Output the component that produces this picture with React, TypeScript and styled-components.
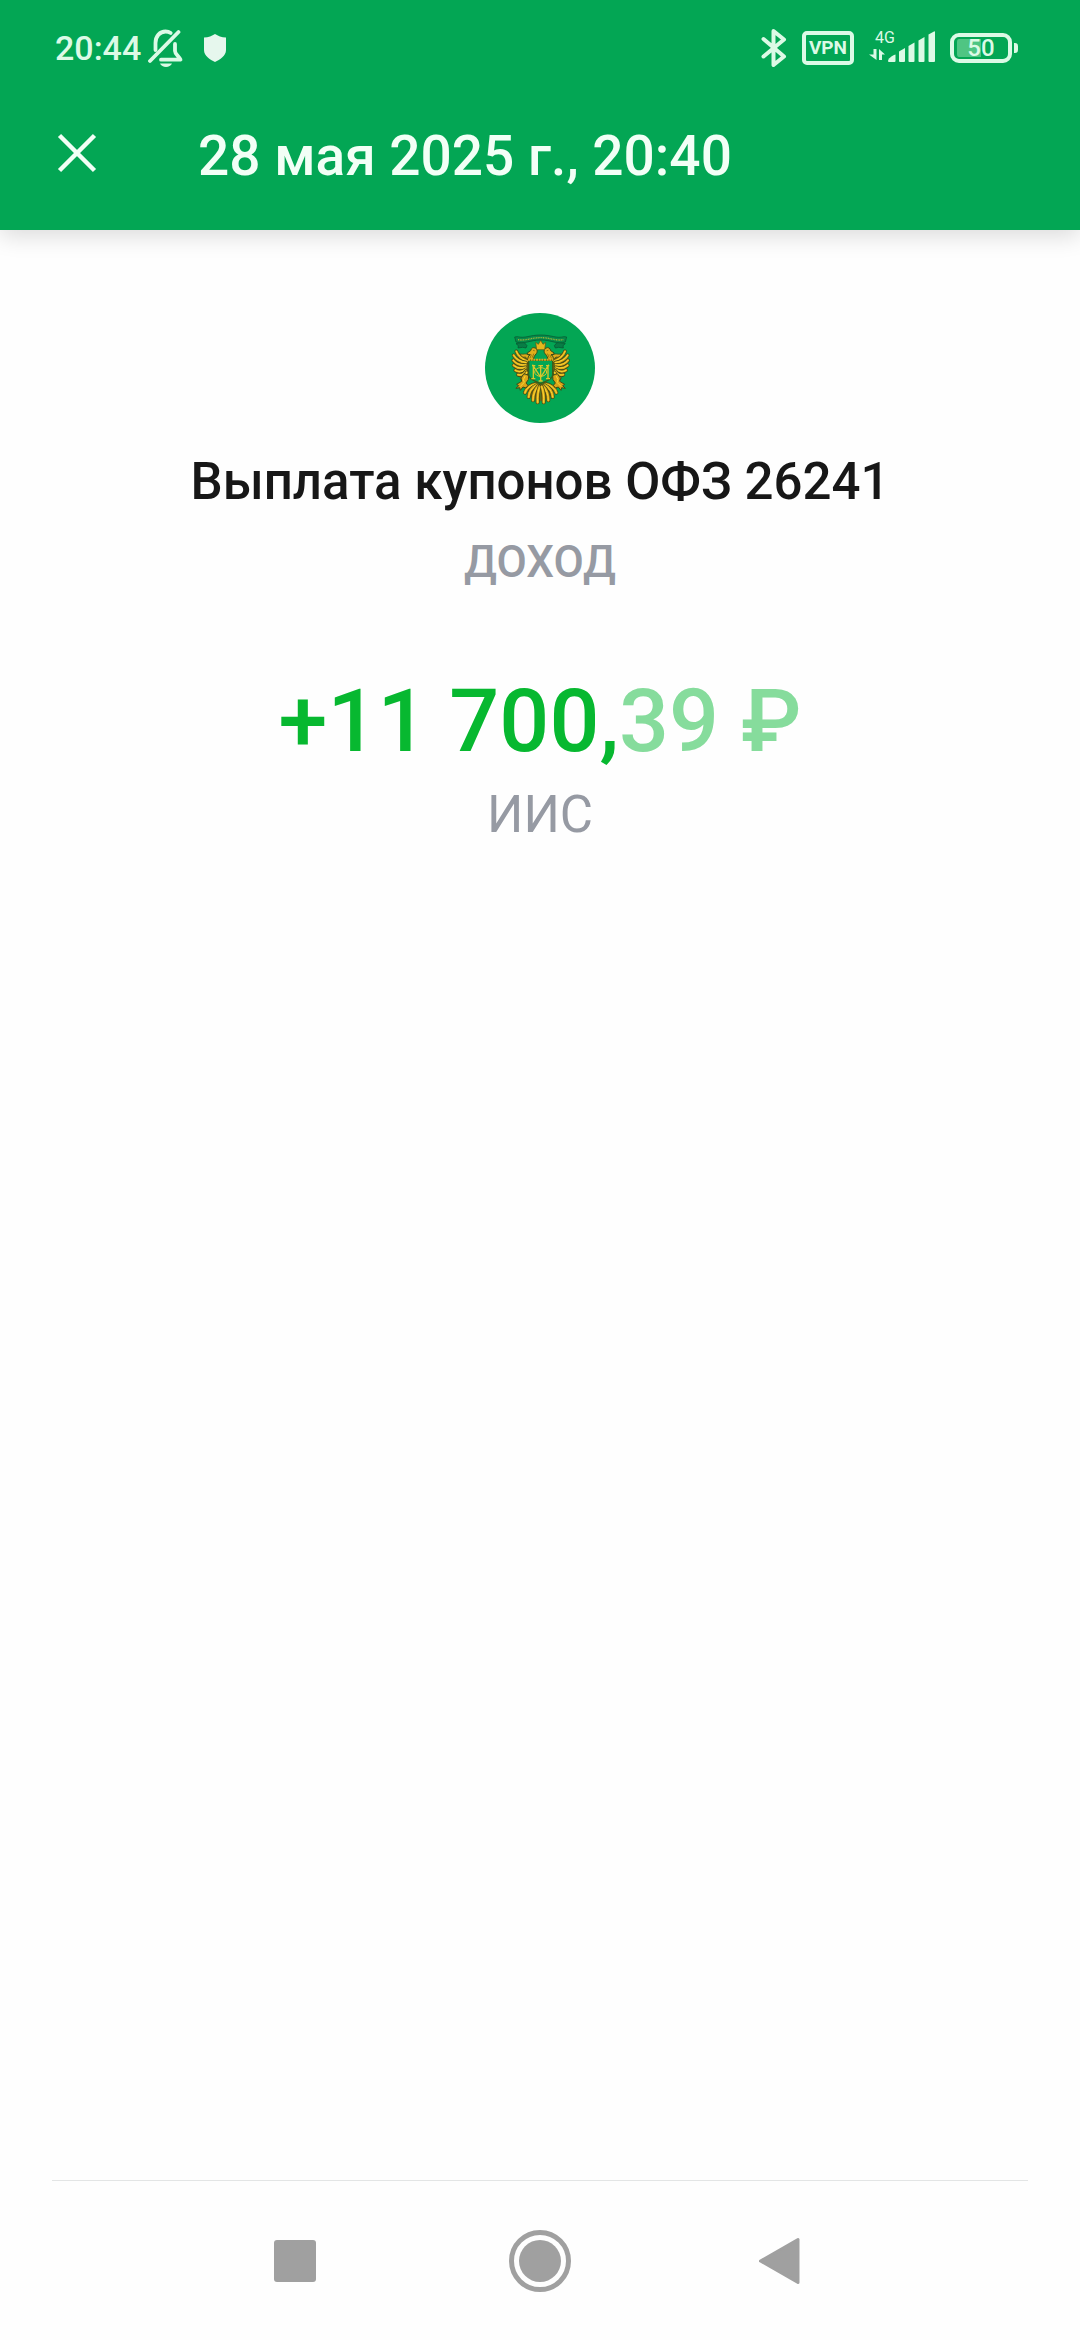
import React from 'react';
import styled, { createGlobalStyle } from 'styled-components';

const green = '#03a654';
const mint = '#dcfae6';

const GlobalStyle = createGlobalStyle`
  *, *::before, *::after { box-sizing: border-box; }
  body {
    margin: 0;
    background: #fefefe;
    font-family: Roboto, "Noto Sans", sans-serif;
  }
  h1, h2, p { margin: 0; }
  svg { display: block; flex: none; }
`;

const Page = styled.div`
  display: flex;
  flex-direction: column;
  min-height: 100vh;
`;

const Header = styled.header`
  background: ${green};
  color: #f2fff6;
  box-shadow: 0 6px 22px rgba(0, 0, 0, 0.14);
`;

const StatusBar = styled.div`
  display: flex;
  align-items: center;
  justify-content: space-between;
  height: 95px;
  padding: 0 62px 0 55px;
  color: ${mint};
`;

const StatusGroup = styled.div<{ $gap: number }>`
  display: flex;
  align-items: center;
  gap: ${(p) => p.$gap}px;
`;

const Clock = styled.time`
  font-size: 34px;
  line-height: 40px;
  font-weight: 500;
`;

const ShieldSlot = styled.span`
  padding-left: 12px;
`;

const VpnBadge = styled.span`
  display: flex;
  align-items: center;
  justify-content: center;
  width: 52px;
  height: 34px;
  border: 4px solid ${mint};
  border-radius: 5px;
  font-size: 19px;
  line-height: 20px;
  font-weight: 700;
`;

const Signal = styled.span`
  display: flex;
  flex-direction: column;
  width: 66px;
  height: 36px;
`;

const NetworkType = styled.span`
  height: 0;
  padding-left: 6px;
  font-size: 16px;
  line-height: 16px;
`;

const Battery = styled.span`
  display: flex;
  align-items: center;
  gap: 2px;
`;

const BatteryBody = styled.span<{ $level: number }>`
  display: flex;
  align-items: center;
  justify-content: center;
  width: 62px;
  height: 30px;
  padding: 2px 3px;
  border: 4px solid ${mint};
  border-radius: 9px;
  background: linear-gradient(90deg, #4fc583 ${(p) => p.$level}%, transparent ${(p) => p.$level}%) content-box;
  font-size: 24px;
  line-height: 24px;
  font-weight: 500;
`;

const BatteryTip = styled.span`
  width: 4px;
  height: 10px;
  border-radius: 0 3px 3px 0;
  background: ${mint};
`;

const Toolbar = styled.div`
  display: flex;
  align-items: center;
  gap: 84px;
  height: 135px;
  padding: 0 40px 14px;
`;

const CloseButton = styled.button`
  display: flex;
  align-items: center;
  justify-content: center;
  width: 74px;
  height: 74px;
  padding: 0 0 6px;
  border: 0;
  background: none;
  color: inherit;
`;

const ToolbarTitle = styled.h1`
  font-size: 55px;
  line-height: 64px;
  font-weight: 500;
`;

const Main = styled.main`
  display: flex;
  flex: 1;
  flex-direction: column;
  align-items: center;
  padding: 83px 32px 0;
  text-align: center;
`;

const OperationName = styled.h2`
  margin-top: 29px;
  color: #171717;
  font-size: 51px;
  line-height: 60px;
  font-weight: 500;
`;

const Category = styled.p`
  margin-top: 22px;
  color: #969aa3;
  font-size: 44px;
  line-height: 56px;
  font-weight: 500;
`;

const Amount = styled.p`
  margin-top: 79px;
  color: #07b830;
  font-size: 88px;
  line-height: 104px;
  font-weight: 500;
  font-kerning: none;
`;

const Fraction = styled.span`
  color: #86dc9c;
`;

const Account = styled.p`
  margin-top: 12px;
  color: #969aa3;
  font-size: 51px;
  line-height: 60px;
`;

const Divider = styled.hr`
  align-self: stretch;
  height: 1px;
  margin: 0 52px;
  border: 0;
  background: #e3e5e5;
`;

const NavBar = styled.nav`
  display: flex;
  align-items: center;
  justify-content: center;
  gap: 146px;
  height: 159px;
`;

const NavButton = styled.button`
  display: flex;
  align-items: center;
  justify-content: center;
  width: 96px;
  height: 96px;
  padding: 0;
  border: 0;
  background: none;
  color: #a0a0a0;
`;

const BellOffIcon = () => (
  <svg width="36" height="38" viewBox="0 0 36 38" fill="none" stroke="currentColor" strokeWidth="3.8" strokeLinecap="round">
    <path d="M2 32 30.500 3" />
    <path d="M7.500 21V14C7.500 7 12 2.500 17.500 2.500c2 0 3.800.5 5.200 1.500" />
    <path d="M27 15v7c0 3 3.500 5 5.500 8.700H13" strokeLinejoin="round" />
    <path d="M12 34.500h12c-1 2.300-3.300 3.500-6 3.500s-5-1.200-6-3.500Z" fill="currentColor" stroke="none" />
  </svg>
);

const ShieldIcon = () => (
  <svg width="24" height="30" viewBox="0 0 24 30" fill="#e6f7ed">
    <path d="M12 1c3 2 6.500 3.300 11 3.500V17c0 6-6 9.500-11 12C7 26.500 1 23 1 17V4.500C5.500 4.300 9 3 12 1Z" />
  </svg>
);

const BluetoothIcon = () => (
  <svg width="26" height="40" viewBox="0 0 26 40" fill="none" stroke="currentColor" strokeWidth="4" strokeLinecap="round" strokeLinejoin="round">
    <path d="M2.500 11 23 28.500 12.500 37V3L23 11.500 2.500 28.500" />
  </svg>
);

const SignalIcon = () => (
  <svg width="66" height="36" viewBox="0 0 66 36" fill="currentColor">
    <path d="M4.500 19h3v11L0 24.500h4.500ZM10 30V19l6 5.500h-3V30Z" />
    <path d="M19 31c0-2 3.500-5.500 7.500-6.500V31q0 1-1 1H20q-1 0-1-1Z" />
    <path d="M30 21.500 36 18v13q0 1-1 1h-4q-1 0-1-1Z" />
    <path d="M39.500 16l6-3.500V31q0 1-1 1h-4q-1 0-1-1Z" />
    <path d="M49.500 10.500l6-3.500v24q0 1-1 1h-4q-1 0-1-1Z" />
    <path d="M59.500 4.500 65 1.500q1-.5 1 .5v29q0 1-1 1h-4.500q-1 0-1-1Z" />
  </svg>
);

const CloseIcon = () => (
  <svg width="40" height="40" viewBox="0 0 40 40" fill="none" stroke="currentColor" strokeWidth="4.500">
    <path d="M2.500 2.500l35 35M37.500 2.500l-35 35" />
  </svg>
);

const feathers = [
  'M172 184C158 178 144 168 139 154',
  'M168 188C154 186 138 178 131 166',
  'M167 195C154 196 138 192 130 181',
  'M167 202C155 206 140 204 131 196',
  'M167 208C158 215 145 217 136 211',
  'M168 213C162 223 153 227 144 224',
  'M170 217C168 227 163 232 155 234',
];

const tail = [
  'M198 252C184 254 168 264 165 278',
  'M201 255C186 262 177 276 176 291',
  'M205 258C195 268 189 284 189 301',
  'M209 260C204 272 202 290 203 307',
];

const Plumes = ({ paths, width }: { paths: string[]; width: number }) => (
  <g fill="none">
    {paths.map((d) => (
      <g key={d}>
        <path d={d} stroke="#3f4a16" strokeWidth={width + 4} />
        <path d={d} stroke="#dca418" strokeWidth={width} />
        <path d={d} stroke="#f7d930" strokeWidth={3} />
      </g>
    ))}
  </g>
);

const EmblemHalf = () => (
  <g strokeLinejoin="round" strokeLinecap="round">
    <path d="M146 158l30 20 4 46-30 8-12-24Z" fill="#6f6614" />
    <path d="M212 248l-40 22 12 22 28 12Z" fill="#6f6614" />
    <Plumes paths={tail} width={8} />
    <Plumes paths={feathers} width={7} />
    <path d="M180 184l-14-13c-7 2-14-2-15-9 9 2 16-3 25 2Z" fill="#dfaa1b" stroke="#3f4a16" strokeWidth="2" />
    <path d="M173 158l9-6c1-8 8-11 14-8 7 4 7 13 2 18-5 5-7 10-8 18h-16c-1-8 1-12 7-16l-8-1Z" fill="#e3ae1b" stroke="#3f4a16" strokeWidth="3" />
    <path d="M190 151l3 1M184 165l-4 9M191 162l-4 10" fill="none" stroke="#6a5a0e" strokeWidth="2" />
    <path d="M161 222l-8 12 2 10-15 9 6 4-8 8 11-2 2 8 8-10 9 3 6-8-6-7 7-10 1-12Z" fill="#dca418" stroke="#3f4a16" strokeWidth="3" />
    <path d="M165 229l-5 10 3 8-11 11" fill="none" stroke="#f7d930" strokeWidth="3" />
    <path d="M154 127l-16 4 7 6-1 7 14-2 10 2 3-7-7-8Z" fill="#087d45" stroke="#07502f" strokeWidth="2" />
  </g>
);

const Emblem = () => (
  <svg width="110" height="110" viewBox="45 39 330 330" role="img" aria-label="Эмблема">
    <circle cx="210" cy="204" r="165" fill={green} />
    <EmblemHalf />
    <g transform="matrix(-1 0 0 1 424 0)">
      <EmblemHalf />
    </g>
    <path d="M176 181h72v43c0 15-21 19-36 27-15-8-36-12-36-27Z" fill={green} stroke="#3d5d17" strokeWidth="4" />
    <path d="M174 179h76" stroke="#d9aa1d" strokeWidth="6" strokeDasharray="6 2" />
    <g fill="none" stroke="#d9c62b" strokeWidth="4">
      <path d="M186 197h10M184 236h12M228 197h10M228 236h12M190 236v-38l22 34 22-34v38M212 197v46M205 197h14M206 243h12" />
      <ellipse cx="212" cy="216" rx="18" ry="13" strokeWidth="3" />
    </g>
    <path d="M197 127l8 6 7-12 7 12 8-6-3 22h-24Z" fill="#e6b81d" stroke="#5a5310" strokeWidth="2" strokeLinejoin="round" />
    <path d="M134 111l8-1c23 6 37-5 70-5s47 11 70 5l8 1-4 15c-25 8-41-6-74-6s-49 14-74 6Z" fill="#078a4a" stroke="#07502f" strokeWidth="2" strokeLinejoin="round" />
    <path d="M144 119c24 4 38-6 68-6s44 10 68 6" fill="none" stroke="#a9b338" strokeWidth="4" strokeDasharray="3 2" />
  </svg>
);

const App: React.FC = () => (
  <>
    <GlobalStyle />
    <Page>
      <Header>
        <StatusBar>
          <StatusGroup $gap={7}>
            <Clock>20:44</Clock>
            <BellOffIcon />
            <ShieldSlot>
              <ShieldIcon />
            </ShieldSlot>
          </StatusGroup>
          <StatusGroup $gap={15}>
            <BluetoothIcon />
            <VpnBadge>VPN</VpnBadge>
            <Signal>
              <NetworkType>4G</NetworkType>
              <SignalIcon />
            </Signal>
            <Battery>
              <BatteryBody $level={50}>50</BatteryBody>
              <BatteryTip />
            </Battery>
          </StatusGroup>
        </StatusBar>
        <Toolbar>
          <CloseButton type="button" aria-label="Закрыть">
            <CloseIcon />
          </CloseButton>
          <ToolbarTitle>28 мая 2025 г., 20:40</ToolbarTitle>
        </Toolbar>
      </Header>
      <Main>
        <Emblem />
        <OperationName>Выплата купонов ОФЗ 26241</OperationName>
        <Category>ДОХОД</Category>
        <Amount>
          +11 700,<Fraction>39 ₽</Fraction>
        </Amount>
        <Account>ИИС</Account>
      </Main>
      <Divider />
      <NavBar>
        <NavButton type="button" aria-label="Недавние">
          <svg width="48" height="42" viewBox="0 0 48 42" fill="currentColor">
            <rect width="42" height="42" rx="3" />
          </svg>
        </NavButton>
        <NavButton type="button" aria-label="Домой">
          <svg width="62" height="62" viewBox="0 0 62 62" fill="currentColor">
            <circle cx="31" cy="31" r="28.500" fill="none" stroke="currentColor" strokeWidth="5" />
            <circle cx="31" cy="31" r="21" />
          </svg>
        </NavButton>
        <NavButton type="button" aria-label="Назад">
          <svg width="48" height="48" viewBox="0 0 48 48" fill="currentColor" stroke="currentColor" strokeWidth="3" strokeLinejoin="round">
            <path d="M40 2.500v43L2.500 24Z" />
          </svg>
        </NavButton>
      </NavBar>
    </Page>
  </>
);

export default App;
